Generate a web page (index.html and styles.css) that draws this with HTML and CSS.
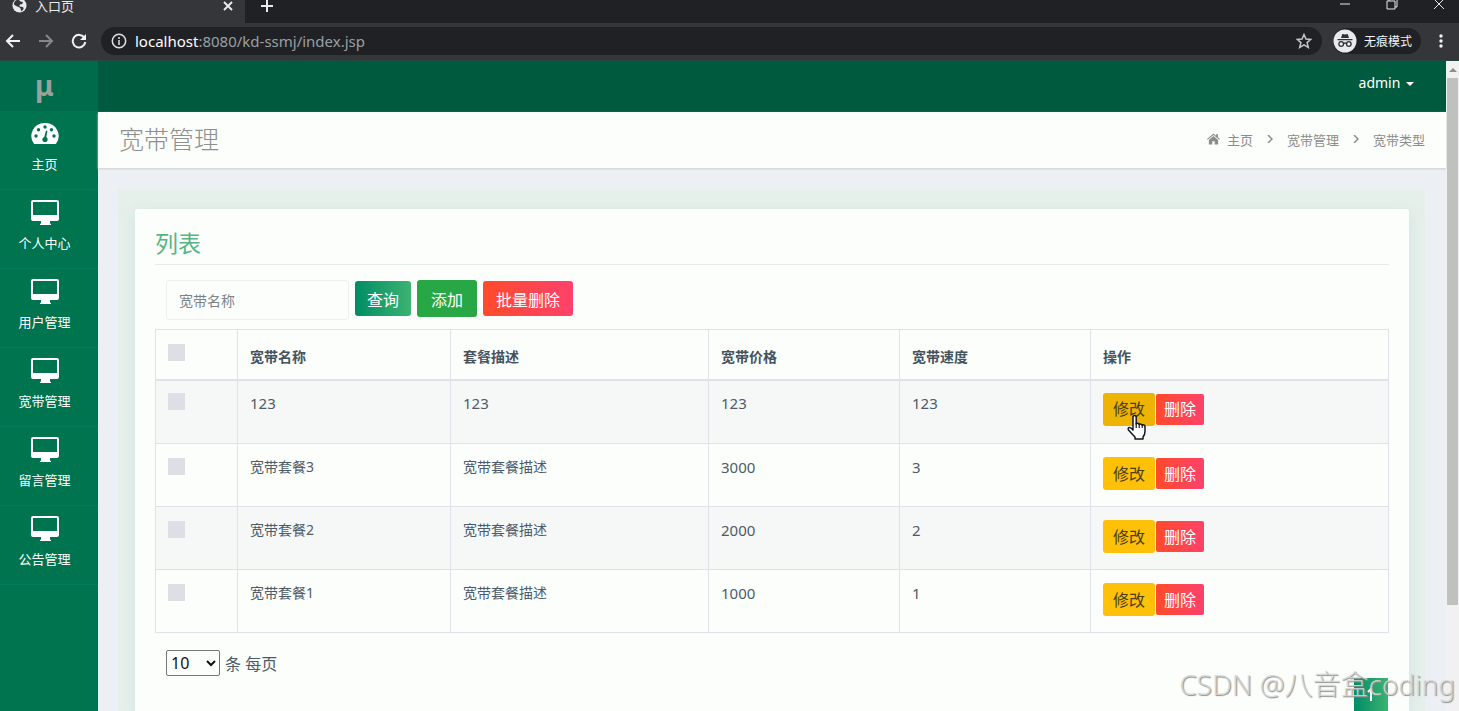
FILE: index.html
```html
<!DOCTYPE html>
<html lang="zh-CN">
<head>
<meta charset="utf-8">
<title>入口页</title>
<link rel="stylesheet" href="styles.css">
</head>
<body>
<svg class="sprite" aria-hidden="true">
  <symbol id="monitor" viewBox="0 0 30 26"><path fill="currentColor" fill-rule="evenodd" d="M3 0h24a2 2 0 0 1 2 2v17a2 2 0 0 1-2 2h-7v2.500l1 .5v1H10v-1l1-.5V21H3a2 2 0 0 1-2-2V2a2 2 0 0 1 2-2zm0 2v13h24V2z"/></symbol>
</svg>
<div class="window">
  <div class="tabstrip">
    <div class="tab">
      <svg class="globe" viewBox="0 0 16 16"><circle cx="8" cy="8" r="7.500" fill="#e8eaed"/><path fill="#35363a" d="M6 2c3 0 2 2 4 2s2 1 1 2-3 0-3 2 3 1 4 2 0 3-2 4c-1-1 0-3-2-4S4 9 2 7c0-3 2-5 4-5z"/></svg>
      <span class="tab-title">入口页</span>
      <button class="tab-close" aria-label="关闭标签页"><svg viewBox="0 0 10 10"><path d="M1 1l8 8M9 1l-8 8"/></svg></button>
    </div>
    <button class="tab-new" aria-label="新标签页"><svg viewBox="0 0 12 12"><path d="M6 0v12M0 6h12"/></svg></button>
    <div class="window-controls">
      <button aria-label="最小化"><svg viewBox="0 0 12 12"><path d="M1 6h10"/></svg></button>
      <button aria-label="还原"><svg viewBox="0 0 12 12"><path d="M1 3h8v8H1zM3 3V1h8v8H9"/></svg></button>
      <button aria-label="关闭"><svg viewBox="0 0 12 12"><path d="M1 1l10 10M11 1L1 11"/></svg></button>
    </div>
  </div>
  <div class="toolbar">
    <button class="nav" aria-label="后退"><svg viewBox="0 0 16 16"><path d="M15 8H2M8 2L2 8l6 6"/></svg></button>
    <button class="nav nav-off" aria-label="前进"><svg viewBox="0 0 16 16"><path d="M1 8h13M8 2l6 6-6 6"/></svg></button>
    <button class="nav" aria-label="重新加载"><svg viewBox="0 0 16 16"><path d="M13.500 5A6.300 6.300 0 1 0 14.300 9"/><path class="solid" d="M15 1v6H9z"/></svg></button>
    <div class="address">
      <svg class="info" viewBox="0 0 16 16"><circle cx="8" cy="8" r="6.700"/><path d="M8 7v5M8 4v2"/></svg>
      <span class="url"><b>localhost</b>:8080/kd-ssmj/index.jsp</span>
      <svg class="star" viewBox="0 0 16 16"><path d="M8 1.500l2 4.500 4.800.4-3.700 3.200 1.200 4.800L8 11.800l-4.300 2.600 1.200-4.800L1.200 6.400 6 6z"/></svg>
    </div>
    <div class="incognito">
      <svg viewBox="0 0 24 24"><circle cx="12" cy="12" r="11.500" fill="#e8eaed"/><path fill="#303134" d="M8 9l1.300-4 2.700.6 2.700-.6L16 9zM4.500 10h15v1.200h-15z"/><path fill="none" stroke="#303134" stroke-width="1.300" d="M10.500 15a2.300 2.300 0 1 1-4.600 0 2.300 2.300 0 0 1 4.600 0zm0-.5q1.500-1 3 0m4.600.5a2.300 2.300 0 1 1-4.600 0 2.300 2.300 0 0 1 4.600 0z"/></svg>
      <span>无痕模式</span>
    </div>
    <button class="kebab" aria-label="菜单"><svg viewBox="0 0 4 14"><circle cx="2" cy="2" r="1.700"/><circle cx="2" cy="7" r="1.700"/><circle cx="2" cy="12" r="1.700"/></svg></button>
  </div>

  <div class="viewport">
    <nav class="sidebar">
      <a class="brand" href="#">μ</a>
      <a class="item" href="#"><svg viewBox="0 0 30 26"><path fill="currentColor" d="M15 2A13 13 0 0 0 3.800 22.500Q4 23 5 23h20q1 0 1.200-.5A13 13 0 0 0 15 2z"/><g fill="#00734f"><circle cx="6" cy="15" r="1.700"/><circle cx="8.500" cy="8.700" r="1.700"/><circle cx="15" cy="6" r="1.700"/><circle cx="21.500" cy="8.700" r="1.700"/><circle cx="24" cy="15" r="1.700"/><circle cx="15" cy="18.500" r="2.600"/><path d="M14 17l2-7.500 1.400.4-1.400 8z"/></g></svg><span>主页</span></a>
      <a class="item" href="#"><svg><use href="#monitor"/></svg><span>个人中心</span></a>
      <a class="item" href="#"><svg><use href="#monitor"/></svg><span>用户管理</span></a>
      <a class="item" href="#"><svg><use href="#monitor"/></svg><span>宽带管理</span></a>
      <a class="item" href="#"><svg><use href="#monitor"/></svg><span>留言管理</span></a>
      <a class="item" href="#"><svg><use href="#monitor"/></svg><span>公告管理</span></a>
    </nav>
    <div class="main">
      <header class="topbar"><button class="user">admin <i class="caret"></i></button></header>
      <div class="heading">
        <h1>宽带管理</h1>
        <nav class="crumbs">
          <a href="#"><svg class="home" viewBox="0 0 14 12"><path d="M7 0l2.800 2.400V.8h2v3.300L14 6l-.8.900L7 1.700.8 6.900 0 6z"/><path d="M7 2.800l5 4.200v5H8.300V8.300H5.700V12H2V7z"/></svg>主页</a>
          <svg class="sep" viewBox="0 0 6 8"><path d="M1 0l4 4-4 4"/></svg>
          <a href="#">宽带管理</a>
          <svg class="sep" viewBox="0 0 6 8"><path d="M1 0l4 4-4 4"/></svg>
          <span>宽带类型</span>
        </nav>
      </div>
      <div class="content">
        <section class="halo">
          <div class="card">
            <h2>列表</h2>
            <form class="filters">
              <input class="search" type="text" placeholder="宽带名称" aria-label="宽带名称">
              <button type="button" class="btn btn-query">查询</button>
              <button type="button" class="btn btn-add">添加</button>
              <button type="button" class="btn btn-bulk">批量删除</button>
            </form>
            <table class="grid">
              <colgroup><col class="c-check"><col class="c-name"><col class="c-desc"><col class="c-price"><col class="c-speed"><col></colgroup>
              <thead>
                <tr><th><input class="tick" type="checkbox" aria-label="全选"></th><th>宽带名称</th><th>套餐描述</th><th>宽带价格</th><th>宽带速度</th><th>操作</th></tr>
              </thead>
              <tbody>
                <tr><td><input class="tick" type="checkbox" aria-label="选择 123"></td><td class="num">123</td><td class="num">123</td><td class="num">123</td><td class="num">123</td><td><div class="ops"><button class="edit edit-hover">修改</button><button class="del">删除</button>
                  <svg class="pointer" viewBox="0 0 20 27"><path fill="#fff" stroke="#151520" stroke-width="1.500" stroke-linejoin="round" d="M6 2.500q1.800-2 3.200 0V10q1.600-1.500 3 .3 1.500-1 2.800.7 2.300-.8 3 1.500v5q0 3-2 5.500v2H8v-2Q5 20 1.500 16q-1-2 .8-2.600Q4 13.300 6 16z"/><path fill="none" stroke="#151520" stroke-width="1.200" d="M9.200 9v5M12.200 10v4M15.200 11v3"/></svg></div></td></tr>
                <tr><td><input class="tick" type="checkbox" aria-label="选择 宽带套餐3"></td><td>宽带套餐3</td><td>宽带套餐描述</td><td class="num">3000</td><td class="num">3</td><td><div class="ops"><button class="edit">修改</button><button class="del">删除</button></div></td></tr>
                <tr><td><input class="tick" type="checkbox" aria-label="选择 宽带套餐2"></td><td>宽带套餐2</td><td>宽带套餐描述</td><td class="num">2000</td><td class="num">2</td><td><div class="ops"><button class="edit">修改</button><button class="del">删除</button></div></td></tr>
                <tr><td><input class="tick" type="checkbox" aria-label="选择 宽带套餐1"></td><td>宽带套餐1</td><td>宽带套餐描述</td><td class="num">1000</td><td class="num">1</td><td><div class="ops"><button class="edit">修改</button><button class="del">删除</button></div></td></tr>
              </tbody>
            </table>
            <label class="pager"><select><option>10</option><option>20</option></select>条 每页</label>
          </div>
        </section>
      </div>
      <button class="to-top" aria-label="返回顶部"><svg viewBox="0 0 8 14"><path d="M1 4l3-3v12"/></svg></button>
    </div>
    <div class="scrollbar"><span class="arrow"></span><span class="thumb"></span></div>
  </div>
  <div class="watermark">CSDN @八音盒coding</div>
</div>
</body>
</html>
```

FILE: styles.css
```css
* { box-sizing: border-box; }
body {
  margin: 0;
  font-family: "Noto Sans", "Noto Sans CJK SC", sans-serif;
  font-size: 14px;
  color: #4d5b69;
}
button { border: 0; padding: 0; background: none; font: inherit; color: inherit; }
a { color: inherit; text-decoration: none; }
svg { display: block; flex: none; }
.sprite { position: absolute; width: 0; height: 0; }
.window { position: relative; display: flex; flex-direction: column; height: 100vh; overflow: hidden; }

/* Browser frame */
.tabstrip { display: flex; flex: none; height: 23px; background: #202124; color: #e8eaed; }
.tabstrip svg, .nav svg, .info, .star { fill: none; stroke: currentColor; stroke-width: 2; }
.tab { display: flex; align-items: center; gap: 8px; width: 245px; height: 23px; padding: 0 12px 12px; background: #35363a; }
.tabstrip .globe { width: 15px; height: 15px; stroke: none; }
.tab-title { flex: 1; line-height: 12px; font-size: 13px; }
.tab-close svg { width: 10px; height: 10px; }
.tab-new { padding: 0 16px 12px; }
.tab-new svg { width: 12px; height: 12px; }
.window-controls { display: flex; gap: 35px; margin-left: auto; padding: 0 14px 16px 0; align-items: center; }
.window-controls svg { width: 12px; height: 12px; stroke-width: 1; }
.toolbar { display: flex; flex: none; align-items: center; height: 38px; padding: 0 16px 2px 5px; background: #35363a; border-bottom: 1px solid #26483f; color: #f1f3f4; }
.nav { margin-right: 17px; }
.nav svg { width: 16px; height: 16px; }
.nav-off { color: #85878a; }
.nav .solid { fill: currentColor; stroke: none; }
.address { display: flex; flex: 1; align-items: center; gap: 8px; height: 28px; margin-left: -3px; padding: 0 10px; border-radius: 14px; background: #202124; color: #9aa0a6; }
.info { width: 16px; height: 16px; color: #dfe1e5; }
.info, .star { stroke-width: 1.5; }
.star { width: 16px; height: 16px; color: #c4c7ca; }
.url { flex: 1; font-size: 15px; line-height: 20px; }
.url b { font-weight: 400; color: #fff; }
.incognito { display: flex; align-items: center; gap: 7px; height: 26px; margin: 0 18px 0 11px; padding-right: 9px; border-radius: 13px; background: #202124; font-size: 12px; }
.incognito svg { width: 24px; height: 24px; }
.kebab svg { width: 4px; height: 14px; fill: currentColor; }

/* Page */
.viewport { display: flex; flex: 1; min-height: 0; }
.sidebar { flex: none; width: 98px; background: #00734f; color: #fff; }
.brand { display: block; height: 50px; padding-right: 9px; background: #006b4b; color: #98a29c; font-size: 28px; font-weight: 700; line-height: 48px; text-align: center; }
.item { display: flex; flex-direction: column; align-items: center; gap: 7px; height: 79px; padding: 10px 9px 0 0; border-bottom: 1px solid #007d57; line-height: 20px; font-size: 13px; }
.item svg { width: 30px; height: 26px; }
.main { position: relative; display: flex; flex: 1; flex-direction: column; min-width: 0; background: #eceff3; }
.topbar { flex: none; height: 51px; padding: 12px 32px 0; background: #005a3d; color: #fff; text-align: right; }
.user { line-height: 20px; }
.caret { display: inline-block; margin-left: 2px; border: 4px solid transparent; border-top-color: #fff; border-bottom: 0; vertical-align: middle; }
.heading { display: flex; flex: none; align-items: center; justify-content: space-between; height: 56px; padding: 0 21px 2px; background: #fcfefb; box-shadow: 0 1px 2px #cdd0d2; color: #8d908f; }
h1 { margin: 0; font-size: 25px; font-weight: 300; line-height: 36px; }
.crumbs { display: flex; align-items: center; gap: 14px; font-size: 13px; color: #8a8d8c; }
.crumbs a { display: flex; align-items: center; gap: 7px; }
.home { width: 13px; height: 12px; fill: currentColor; }
.sep { width: 6px; height: 8px; fill: none; stroke: currentColor; stroke-width: 1.5; }
.content { display: flex; flex: 1; min-height: 0; padding: 21px 21px 0 20px; }
.halo { flex: 1; min-width: 0; padding: 20px 16px 0 17px; background: #e6f0eb; overflow: hidden; }
.card { min-height: 100%; padding: 16px 20px; border-radius: 3px 3px 0 0; background: #fcfefb; box-shadow: 0 4px 14px rgba(185, 213, 224, .5); }
h2 { margin: 0 0 15px; padding-bottom: 3px; border-bottom: 1px solid #e7eaea; color: #57b584; font-size: 23px; font-weight: 400; line-height: 36px; }
.filters { display: flex; align-items: center; gap: 6px; margin: 0 0 9px; padding-left: 11px; }
.search { width: 183px; height: 40px; padding: 0 12px; border: 1px solid #ebf1ee; border-radius: 3px; background: transparent; font: inherit; color: inherit; }
.search::placeholder { color: #7b8388; opacity: 1; }
.btn { height: 35px; margin-bottom: 3px; padding: 0 13px; border-radius: 3px; color: #fff; font-size: 16px; }
.btn-query { padding: 0 12px; background: linear-gradient(90deg, #008c65, #3cb371); }
.btn-add { height: 37px; padding: 0 14px; background: #28a745; }
.btn-bulk { background: linear-gradient(90deg, #ff4b2b, #ff416c); }
.grid { width: 100%; border-collapse: collapse; table-layout: fixed; line-height: 20px; }
.grid th, .grid td { border: 1px solid #dee2e9; padding: 13px 12px 0; text-align: left; vertical-align: top; }
.grid th { height: 50px; padding-top: 17px; border-bottom-width: 2px; color: #44535f; font-weight: 700; }
.grid td { height: 63px; }
.grid tbody tr:first-child td { height: 64px; padding-top: 12px; }
.grid th:first-child, .grid td:first-child { padding-top: 14px; }
.grid tbody tr:nth-child(odd) { background: #f6f8f8; }
.grid .num { font-size: 15px; }
.c-check { width: 82px; }
.c-name { width: 213px; }
.c-desc { width: 258px; }
.c-price { width: 191px; }
.c-speed { width: 191px; }
.tick { display: block; appearance: none; width: 17px; height: 17px; margin: 0; background: #dce0e5; }
.ops { position: relative; display: flex; align-items: center; gap: 1px; font-size: 16px; }
.edit { height: 33px; padding: 0 10px; border-radius: 3px; background: #ffc107; color: #4b3e16; }
.edit-hover { background: #edb403; }
.del { height: 31px; padding: 0 8px; border-radius: 2px; background: linear-gradient(90deg, #ff4b2b, #ff416c); color: #fff; }
.pointer { position: absolute; top: 21px; left: 24px; width: 20px; height: 27px; }
.pager { display: flex; align-items: center; gap: 5px; margin: 17px 0 0 11px; font-size: 16px; }
.pager select { width: 54px; height: 26px; border: 1px solid #767676; border-radius: 2px; background: #fcfefb; color: #111; font: inherit; }
.to-top { position: absolute; right: 58px; bottom: 0; width: 34px; height: 33px; background: linear-gradient(90deg, #008c65, #3cb371); color: #fff; }
.to-top svg { width: 8px; height: 14px; margin: 0 auto; fill: none; stroke: currentColor; stroke-width: 2; }
.scrollbar { display: flex; flex: none; flex-direction: column; align-items: center; width: 13px; background: #f0f1f0; }
.arrow { margin: 7px 0 6px; border: 4px solid transparent; border-bottom-color: #8c8c8c; border-top: 0; }
.thumb { width: 11px; height: 81%; background: #bfc1bf; }
.watermark { position: absolute; right: 4px; bottom: 6px; color: rgba(215, 217, 217, .85); font-size: 28px; font-weight: 300; line-height: 42px; text-shadow: 1px 1px 1px #8b8f8e; }
```
